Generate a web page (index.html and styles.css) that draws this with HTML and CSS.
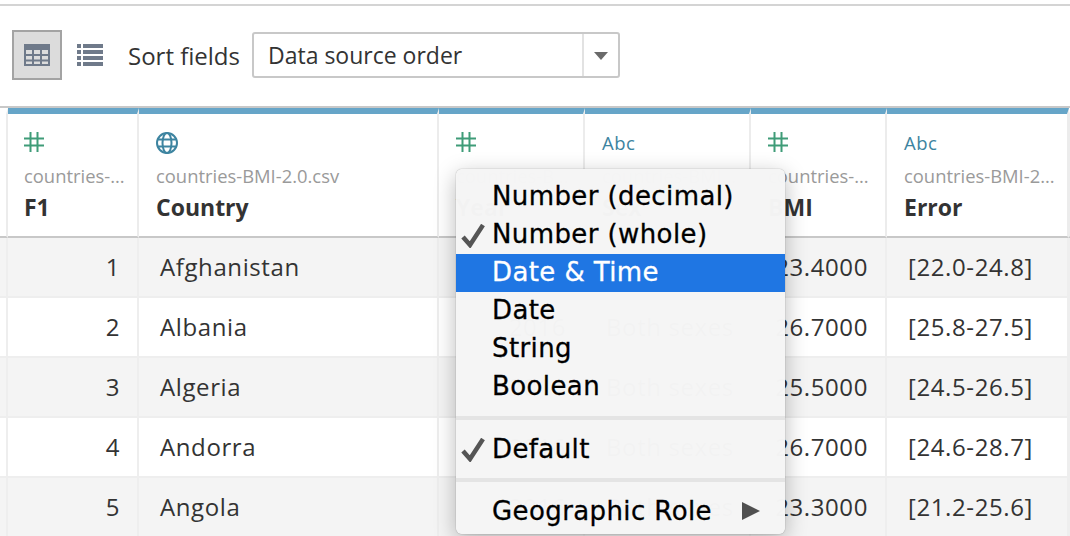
FILE: index.html
```html
<!DOCTYPE html>
<html lang="en">
<head>
  <meta charset="UTF-8" />
  <title>Data source grid</title>
  <link rel="stylesheet" href="styles.css">
</head>
<body>
  <div class="page">
    <div class="toolbar">
      <button class="view-btn active" aria-label="Grid view">
        <svg width="26" height="22" viewBox="0 0 26 22"><path fill="#6f7a8a" fill-rule="evenodd" d="M0 0h26v22H0zM2 6v4h6V6zm8 0v4h6V6zm8 0v4h6V6zM2 12v3.500h6V12zm8 0v3.500h6V12zm8 0v3.500h6V12zM2 17.500V20h6v-2.500zm8 0V20h6v-2.500zm8 0V20h6v-2.500z"/></svg>
      </button>
      <button class="view-btn" aria-label="List view">
        <svg width="26" height="22" viewBox="0 0 26 22"><path fill="#6f7a8a" d="M0 0h4v4H0zM6 0h20v4H6zM0 6h4v4H0zM6 6h20v4H6zM0 12h4v4H0zM6 12h20v4H6zM0 18h4v4H0zM6 18h20v4H6z"/></svg>
      </button>
      <span class="sort-label">Sort fields</span>
      <div class="select">
        <span class="select-text">Data source order</span>
        <span class="select-arrow"></span>
      </div>
    </div>

    <div class="grid">
      <div class="head lead"></div>
      <div class="head first">
        <svg class="hash" width="20" height="20" viewBox="0 0 20 20"><path d="M6.500 0v20M13.500 0v20M0 6.500h20M0 13.500h20" stroke="#3f9c78" stroke-width="2" fill="none"/></svg>
        <div class="source">countries-...</div>
        <div class="name">F1</div>
      </div>
      <div class="head">
        <svg class="globe" width="22" height="22" viewBox="0 0 22 22" fill="none" stroke="#3d84a0" stroke-width="2"><circle cx="11" cy="11" r="10"/><ellipse cx="11" cy="11" rx="4.500" ry="10"/><path d="M1 7.500h20M1 14.500h20"/></svg>
        <div class="source">countries-BMI-2.0.csv</div>
        <div class="name">Country</div>
      </div>
      <div class="head">
        <svg class="hash" width="20" height="20" viewBox="0 0 20 20"><path d="M6.500 0v20M13.500 0v20M0 6.500h20M0 13.500h20" stroke="#3f9c78" stroke-width="2" fill="none"/></svg>
        <div class="source">countries-B...</div>
        <div class="name">Year</div>
      </div>
      <div class="head">
        <div class="abc">Abc</div>
        <div class="source">countries-BMI...</div>
        <div class="name">Sex</div>
      </div>
      <div class="head">
        <svg class="hash" width="20" height="20" viewBox="0 0 20 20"><path d="M6.500 0v20M13.500 0v20M0 6.500h20M0 13.500h20" stroke="#3f9c78" stroke-width="2" fill="none"/></svg>
        <div class="source">countries-...</div>
        <div class="name">BMI</div>
      </div>
      <div class="head">
        <div class="abc">Abc</div>
        <div class="source">countries-BMI-2...</div>
        <div class="name">Error</div>
      </div>
      <div class="head tail"></div>

      <div class="cell lead odd"></div><div class="cell num odd">1</div><div class="cell odd">Afghanistan</div><div class="cell num odd">2016</div><div class="cell odd">Both sexes</div><div class="cell num odd">23.4000</div><div class="cell odd">[22.0-24.8]</div><div class="cell tail odd"></div>
      <div class="cell lead"></div><div class="cell num">2</div><div class="cell">Albania</div><div class="cell num">2016</div><div class="cell">Both sexes</div><div class="cell num">26.7000</div><div class="cell">[25.8-27.5]</div><div class="cell tail"></div>
      <div class="cell lead odd"></div><div class="cell num odd">3</div><div class="cell odd">Algeria</div><div class="cell num odd">2016</div><div class="cell odd">Both sexes</div><div class="cell num odd">25.5000</div><div class="cell odd">[24.5-26.5]</div><div class="cell tail odd"></div>
      <div class="cell lead"></div><div class="cell num">4</div><div class="cell">Andorra</div><div class="cell num">2016</div><div class="cell">Both sexes</div><div class="cell num">26.7000</div><div class="cell">[24.6-28.7]</div><div class="cell tail"></div>
      <div class="cell lead odd"></div><div class="cell num odd">5</div><div class="cell odd">Angola</div><div class="cell num odd">2016</div><div class="cell odd">Both sexes</div><div class="cell num odd">23.3000</div><div class="cell odd">[21.2-25.6]</div><div class="cell tail odd"></div>
    </div>

    <div class="menu">
      <div class="menu-item">Number (decimal)</div>
      <div class="menu-item">
        <svg class="check" width="24" height="24" viewBox="0 0 24 24"><path d="M2 13l7 8L22 1" fill="none" stroke="#555" stroke-width="4.500"/></svg>
        Number (whole)
      </div>
      <div class="menu-item selected">Date &amp; Time</div>
      <div class="menu-item">Date</div>
      <div class="menu-item">String</div>
      <div class="menu-item">Boolean</div>
      <div class="menu-sep"></div>
      <div class="menu-item">
        <svg class="check" width="24" height="24" viewBox="0 0 24 24"><path d="M2 13l7 8L22 1" fill="none" stroke="#555" stroke-width="4.500"/></svg>
        Default
      </div>
      <div class="menu-sep"></div>
      <div class="menu-item submenu">Geographic Role</div>
    </div>
  </div>
</body>
</html>
```

FILE: styles.css
```css
html, body {
  margin: 0;
  height: 100%;
  overflow: hidden;
  background: #fff;
}
.page {
  position: relative;
  width: 1070px;
  height: 536px;
  overflow: hidden;
  font-family: 'Open Sans', sans-serif;
  color: #333;
}
.toolbar {
  margin-top: 4px;
  height: 98px;
  padding-bottom: 2px;
  border-top: 2px solid #d4d4d4;
  border-bottom: 2px solid #c8c8c8;
  padding-left: 12px;
  display: flex;
  align-items: center;
}
.view-btn {
  width: 50px;
  height: 50px;
  padding: 0;
  margin: 0;
  background: none;
  border: 2px solid transparent;
  display: flex;
  align-items: center;
  justify-content: center;
}
.view-btn.active {
  background: #dcdcdc;
  border-color: #a3a3a3;
}
.view-btn + .view-btn {
  width: 56px;
}
.sort-label {
  font-size: 24px;
  margin-left: 10px;
  color: #333;
}
.select {
  margin-left: 12px;
  width: 368px;
  height: 46px;
  border: 2px solid #c8c8c8;
  border-radius: 3px;
  box-sizing: border-box;
  display: flex;
  align-items: center;
}
.select-text {
  flex: 1;
  padding: 0 0 1px 14px;
  font-size: 23px;
}
.select-arrow {
  width: 34px;
  height: 100%;
  border-left: 2px solid #e2e2e2;
  position: relative;
}
.select-arrow::after {
  content: "";
  position: absolute;
  left: 10px;
  top: 18px;
  border-style: solid;
  border-width: 8px 7px 0 7px;
  border-color: #6a6a6a transparent transparent transparent;
}
.grid {
  display: grid;
  grid-template-columns: 8px 131px 300px 146px 166px 136px 182px 1px;
  grid-template-rows: 130px repeat(5, 60px);
}
.head {
  border-top: 6px solid #66a5c8;
  border-right: 2px solid #ececec;
  border-bottom: 2px solid #c8c8c8;
  box-sizing: border-box;
  padding: 18px 0 0 17px;
  background: #fff;
  min-width: 0;
}
.head.first {
  padding-left: 16px;
}
.head.lead, .head.tail {
  border-top-color: #fff;
  padding: 0;
}
.hash {
  display: block;
  padding-bottom: 2px;
}
.globe {
  display: block;
}
.abc {
  height: 22px;
  line-height: 22px;
  font-size: 18.500px;
  color: #3d84a0;
  letter-spacing: 0.5px;
}
.source {
  margin-top: 10px;
  font-size: 18.400px;
  line-height: 24px;
  color: #9a9a9a;
  white-space: nowrap;
}
.name {
  margin-top: 4px;
  font-size: 23px;
  line-height: 30px;
  font-weight: 700;
  color: #333;
}
.cell {
  height: 60px;
  box-sizing: border-box;
  border-right: 2px solid #eeeeee;
  border-bottom: 2px solid #eeeeee;
  padding: 0 0 2px 21px;
  display: flex;
  align-items: center;
  font-size: 24px;
  letter-spacing: 0.6px;
  color: #333;
  background: #fff;
  white-space: nowrap;
}
.cell.odd {
  background: #f4f4f4;
}
.cell.num {
  justify-content: flex-end;
  padding: 0 17px 2px 0;
}
.cell.lead, .cell.tail {
  padding: 0;
}
.menu {
  position: absolute;
  left: 456px;
  top: 169px;
  width: 329px;
  height: 365px;
  box-sizing: border-box;
  padding-top: 9px;
  background: rgba(245, 245, 245, 0.99);
  border-radius: 6px;
  box-shadow: 0 0 1px rgba(0, 0, 0, 0.55), 0 6px 22px rgba(0, 0, 0, 0.28);
  font-family: 'DejaVu Sans', sans-serif;
  font-size: 26px;
  letter-spacing: 0.4px;
  -webkit-text-stroke: 0.3px;
  color: #000;
}
.menu-item {
  height: 38px;
  line-height: 36px;
  padding-left: 36px;
  position: relative;
  white-space: nowrap;
}
.menu-sep + .menu-item {
  line-height: 38px;
}
.menu-item.selected {
  background: rgba(22, 112, 226, 0.96);
  color: #fff;
}
.check {
  position: absolute;
  left: 5px;
  top: 8px;
}
.menu-item.submenu::after {
  content: "";
  position: absolute;
  right: 25px;
  top: 10px;
  border-style: solid;
  border-width: 9.500px 0 9.500px 18px;
  border-color: transparent transparent transparent #505050;
}
.menu-sep {
  height: 4px;
  margin: 10px 0;
  background: #e4e4e4;
}
```
